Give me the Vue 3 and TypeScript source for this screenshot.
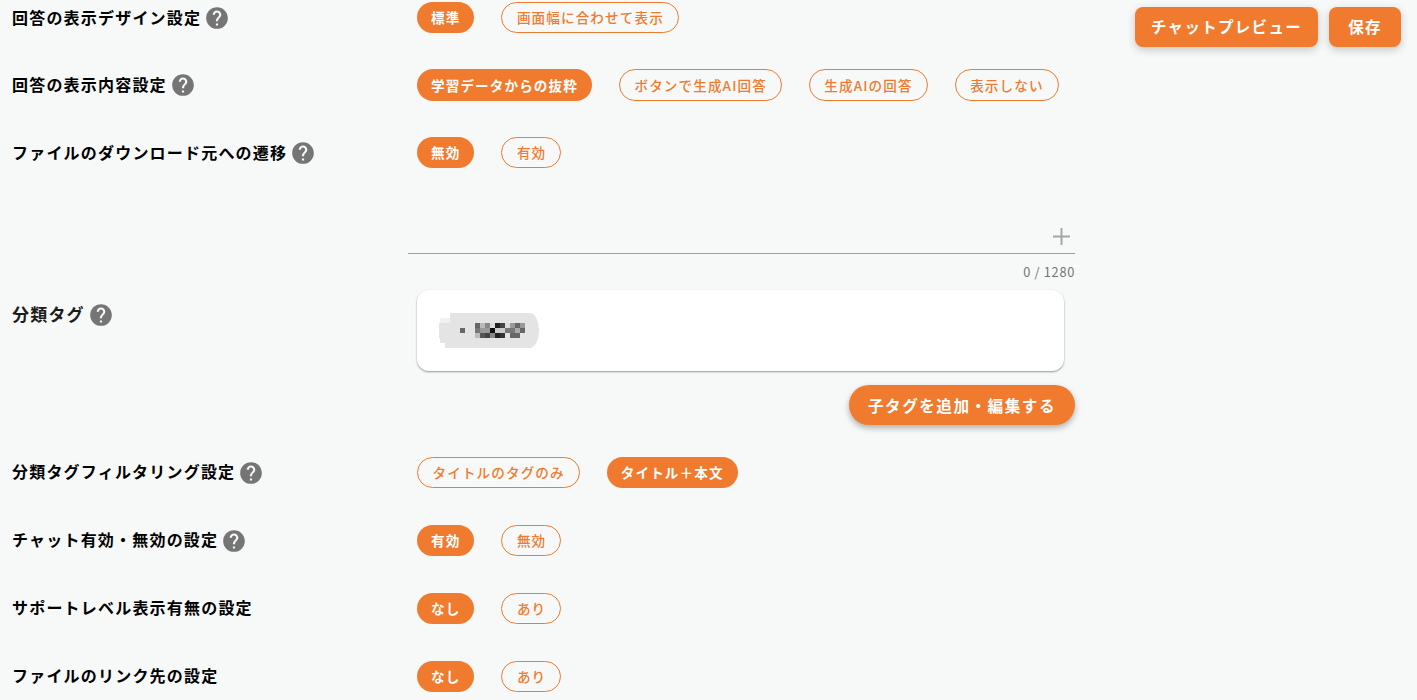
<script setup lang="ts">
interface Row { label: string; help: boolean; options: string[]; active: number }
const top: Row[] = [
  { label: '回答の表示デザイン設定', help: true, options: ['標準', '画面幅に合わせて表示'], active: 0 },
  { label: '回答の表示内容設定', help: true, options: ['学習データからの抜粋', 'ボタンで生成AI回答', '生成AIの回答', '表示しない'], active: 0 },
  { label: 'ファイルのダウンロード元への遷移', help: true, options: ['無効', '有効'], active: 0 },
]
const bottom: Row[] = [
  { label: '分類タグフィルタリング設定', help: true, options: ['タイトルのタグのみ', 'タイトル＋本文'], active: 1 },
  { label: 'チャット有効・無効の設定', help: true, options: ['有効', '無効'], active: 0 },
  { label: 'サポートレベル表示有無の設定', help: false, options: ['なし', 'あり'], active: 0 },
  { label: 'ファイルのリンク先の設定', help: false, options: ['なし', 'あり'], active: 0 },
]
const helpPath = 'M15.07,11.25L14.17,12.17C13.45,12.89 13,13.5 13,15H11V14.5C11,13.39 11.45,12.39 12.17,11.67L13.41,10.41C13.78,10.05 14,9.55 14,9C14,7.89 13.1,7 12,7A2,2 0 0,0 10,9H8A4,4 0 0,1 12,5A4,4 0 0,1 16,9C16,9.88 15.64,10.67 15.07,11.25M13,19H11V17H13M12,2A10,10 0 0,0 2,12A10,10 0 0,0 12,22A10,10 0 0,0 22,12C22,6.47 17.5,2 12,2Z'
const mosaic: string[][] = [
  ['#666', '#bbb', '#888', '#ddd', '#222', '#444', '#ddd', '#999', '#666', '#999'],
  ['#777', '#999', '#999', '#111', '#ccc', '#ccc', '#777', '#777', '#aaa', '#666'],
  ['#bbb', '#555', '#444', '#888', '#222', '#333', '#e4e4e4', '#666', '#666', '#e4e4e4'],
]
</script>

<template>
  <div class="page">
    <div class="actions">
      <button class="action">チャットプレビュー</button>
      <button class="action save">保存</button>
    </div>

    <div v-for="row in top" :key="row.label" class="row first">
      <div class="label">
        <span class="text">{{ row.label }}</span>
        <svg v-if="row.help" class="help" viewBox="0 0 24 24"><path :d="helpPath" /></svg>
      </div>
      <div class="pills">
        <span v-for="(o, i) in row.options" :key="o" class="pill" :class="{ on: i === row.active }">{{ o }}</span>
      </div>
    </div>

    <div class="tagrow">
      <div class="label taglabel">
        <span class="text">分類タグ</span>
        <svg class="help" viewBox="0 0 24 24"><path :d="helpPath" /></svg>
      </div>
      <div class="tagbody">
        <div class="field">
          <svg class="plus" viewBox="0 0 17 17"><path d="M8.5 0V17M0 8.5H17" /></svg>
        </div>
        <div class="counter">0 / 1280</div>
        <div class="card">
          <svg class="chip" width="101" height="35" viewBox="0 0 101 35">
            <rect x="1" y="5" width="10" height="5" fill="#f1f1f1" shape-rendering="crispEdges" />
            <path d="M11 0H91A9 17.5 0 0 1 91 35H6V30H1V25H0V10H11Z" fill="#e4e4e4" />
            <rect x="21" y="15" width="5" height="5" fill="#666" shape-rendering="crispEdges" />
            <template v-for="(line, y) in mosaic" :key="y">
              <rect v-for="(c, x) in line" :key="x" :x="36 + x * 5" :y="10 + y * 5" width="5" height="5" :fill="c" shape-rendering="crispEdges" />
            </template>
          </svg>
        </div>
        <div class="childwrap">
          <button class="child">子タグを追加・編集する</button>
        </div>
      </div>
    </div>

    <div v-for="row in bottom" :key="row.label" class="row">
      <div class="label">
        <span class="text">{{ row.label }}</span>
        <svg v-if="row.help" class="help" viewBox="0 0 24 24"><path :d="helpPath" /></svg>
      </div>
      <div class="pills">
        <span v-for="(o, i) in row.options" :key="o" class="pill" :class="{ on: i === row.active }">{{ o }}</span>
      </div>
    </div>
  </div>
</template>

<style>
html, body { margin: 0; background: #f7f9f8; overflow: hidden; }
</style>

<style scoped>
.page {
  position: relative;
  box-sizing: border-box;
  width: 1417px;
  height: 700px;
  padding: 1.7px 0 0 12px;
  overflow: hidden;
  background: #f7f9f8;
  font-family: "Noto Sans CJK JP", "Noto Sans", sans-serif;
  color: #000;
}
.actions {
  position: absolute;
  top: 7px;
  right: 16px;
  display: flex;
  gap: 11px;
}
.action {
  height: 40px;
  padding: 0 16px 2px;
  border: 0;
  border-radius: 8px;
  background: #f07a2e;
  color: #fff;
  font: 700 15.5px "Noto Sans CJK JP", sans-serif;
  letter-spacing: 1.3px;
  box-shadow: 0 3px 8px rgba(0, 0, 0, 0.2);
}
.save {
  width: 72px;
  padding: 0 0 2px;
}
.row {
  display: grid;
  grid-template-columns: 396px 667px;
  height: 68px;
}
.row.first {
  height: 67.6px;
}
.label {
  display: flex;
  align-items: center;
  gap: 3px;
  height: 30px;
  font-size: 16px;
  font-weight: 700;
  letter-spacing: 1.2px;
  white-space: nowrap;
}
.text {
  padding-bottom: 2px;
}
.first .text {
  padding-bottom: 0;
}
.help {
  width: 26px;
  height: 26px;
  margin-top: 2px;
  fill: #757575;
}
.pills {
  display: flex;
  align-items: flex-start;
  gap: 27px;
  padding-left: 9px;
}
.pill {
  box-sizing: border-box;
  height: 31px;
  padding: 0 14px 1px 14.5px;
  display: flex;
  align-items: center;
  border: 1px solid #f07a2e;
  border-radius: 16px;
  color: #f07a2e;
  font-size: 13.6px;
  font-weight: 500;
  letter-spacing: 1.1px;
  white-space: nowrap;
}
.first .pill {
  height: 31.6px;
}
.pill.on {
  padding: 0 14px 1px;
  border: 0;
  background: #f07a2e;
  color: #fff;
  font-weight: 700;
}
.tagrow {
  display: grid;
  grid-template-columns: 396px 667px;
  height: 252.5px;
}
.taglabel {
  margin-top: 95px;
  font-size: 17px;
  color: #1c1c1c;
}
.tagbody {
  display: flex;
  flex-direction: column;
}
.field {
  box-sizing: border-box;
  height: 49.5px;
  border-bottom: 1px solid #9e9e9e;
  display: flex;
  justify-content: flex-end;
  padding: 23.5px 5px 0 0;
}
.plus {
  width: 17px;
  height: 17px;
  stroke: #a6a6a6;
  stroke-width: 2;
  fill: none;
}
.counter {
  height: 36px;
  padding-top: 9px;
  box-sizing: border-box;
  text-align: right;
  font-size: 12.8px;
  line-height: 18px;
  letter-spacing: 0.7px;
  color: #757575;
}
.card {
  box-sizing: border-box;
  height: 81px;
  margin: 0 11px 0 9px;
  padding: 23px 0 0 22px;
  background: #fff;
  border-radius: 12px;
  box-shadow: 0 1px 2px rgba(0, 0, 0, 0.4);
}
.chip {
  display: block;
}
.childwrap {
  display: flex;
  justify-content: flex-end;
  margin-top: 14px;
}
.child {
  height: 40px;
  padding: 0 19px;
  border: 0;
  border-radius: 20px;
  background: #f07a2e;
  color: #fff;
  font: 700 15.6px "Noto Sans CJK JP", sans-serif;
  letter-spacing: 1.5px;
  box-shadow: 0 3px 6px rgba(0, 0, 0, 0.3);
}
</style>
